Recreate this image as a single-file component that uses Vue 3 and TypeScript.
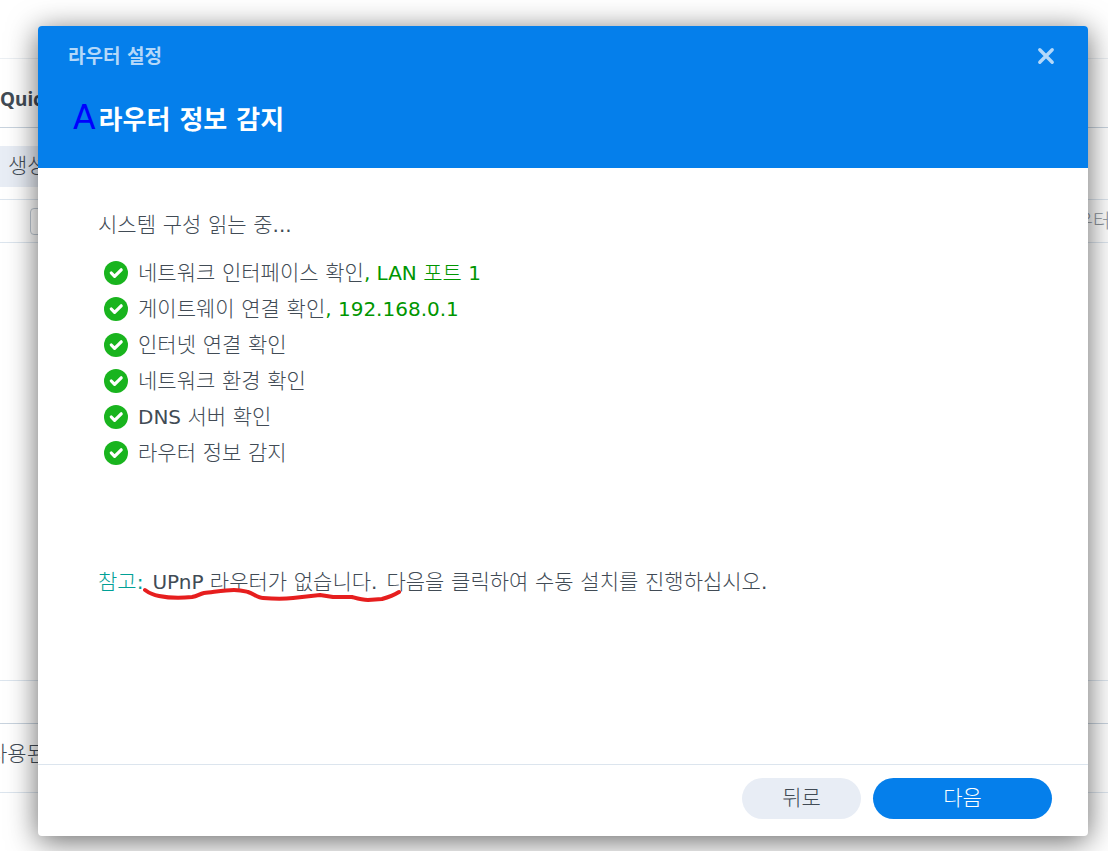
<script setup lang="ts">
interface Step {
  latin?: string
  label: string
  result?: { text: string; latin: boolean }[]
}

const steps: Step[] = [
  {
    label: '네트워크 인터페이스 확인',
    result: [
      { text: ', LAN ', latin: true },
      { text: '포트', latin: false },
      { text: ' 1', latin: true },
    ],
  },
  { label: '게이트웨이 연결 확인', result: [{ text: ', 192.168.0.1', latin: true }] },
  { label: '인터넷 연결 확인' },
  { label: '네트워크 환경 확인' },
  { latin: 'DNS ', label: '서버 확인' },
  { label: '라우터 정보 감지' },
]
</script>

<template>
  <div class="screen">
    <div class="backdrop" aria-hidden="true">
      <div class="bar"></div>
      <div class="tabs">QuickConnect</div>
      <div class="toolbar"><span class="create">생성</span></div>
      <div class="columns"><span class="box"></span><span class="column-name">라우터</span></div>
      <div class="rows"></div>
      <div class="paging"></div>
      <div class="status"><span>사용된</span></div>
    </div>

    <section class="dialog" role="dialog" aria-labelledby="dialog-title">
      <header class="head">
        <div class="title-row">
          <h1 id="dialog-title" class="title">라우터 설정</h1>
          <button class="close" type="button" aria-label="닫기">
            <svg viewBox="0 0 18 18" width="18" height="18">
              <path d="M2.8 2.8 15.2 15.2M15.2 2.8 2.8 15.2" />
            </svg>
          </button>
        </div>
        <div class="headline-row">
          <span class="mark">A</span>
          <h2 class="headline">라우터 정보 감지</h2>
        </div>
      </header>

      <main class="body">
        <p class="intro">시스템 구성 읽는 중<span class="latin">...</span></p>
        <ul class="steps">
          <li v-for="step in steps" :key="step.label" class="step">
            <svg class="tick" viewBox="0 0 24 24" width="24" height="24" aria-hidden="true">
              <circle cx="12" cy="12" r="12" />
              <path d="M7.3 12 10.6 15.4 17.2 8.8" />
            </svg>
            <span class="step-text"><span v-if="step.latin" class="latin">{{ step.latin }}</span>{{ step.label }}<span v-if="step.result" class="result"><span v-for="part in step.result" :key="part.text" :class="{ latin: part.latin }">{{ part.text }}</span></span></span>
          </li>
        </ul>
        <p class="note">
          <span class="note-label">참고<span class="latin">:</span></span>
          <span><span class="latin">UPnP </span>라우터가 없습니다<span class="latin">.</span></span>
          <span>다음을 클릭하여 수동 설치를 진행하십시오<span class="latin">.</span></span>
          <svg class="scribble" viewBox="0 0 262 18" width="262" height="18" aria-hidden="true">
            <path d="M4 5C8 8 12 10 18 11 28 13 42 13 51 12 57 11 58 9 63 8 73 7 84 5 93 5 100 5 103 6 107 7 113 9 117 13 122 13 135 14 143 14 152 13L179 10 192 12 211 12C218 14 221 15 227 15L241 14C248 12 253 10 258 7" />
          </svg>
        </p>
      </main>

      <footer class="foot">
        <button class="btn back" type="button">뒤로</button>
        <button class="btn next" type="button">다음</button>
      </footer>
    </section>
  </div>
</template>

<style>
body {
  margin: 0;
  background: #fff;
}
</style>

<style scoped>
.screen {
  position: relative;
  box-sizing: border-box;
  min-height: 100vh;
  padding: 26px 20px 15px 38px;
  display: flex;
  overflow: hidden;
  color: #414b55;
  font: 300 21px/36px "DejaVu Sans", "Noto Sans CJK KR", sans-serif;
}
.latin {
  font-size: 20px;
  font-weight: 400;
}
.backdrop {
  position: absolute;
  inset: 0;
  display: flex;
  flex-direction: column;
  white-space: nowrap;
}
.backdrop > div {
  box-sizing: border-box;
  border-bottom: 1px solid #dce5ee;
}
.backdrop .bar {
  height: 59px;
  border-color: #ebeff3;
}
.backdrop .tabs {
  height: 69px;
  padding-top: 22px;
  font: 700 19px/36px "Noto Sans", sans-serif;
  border-color: #c8d3de;
}
.toolbar {
  height: 72px;
  padding-top: 18px;
}
.create {
  display: block;
  width: 110px;
  padding-left: 8px;
  background: #e8edf5;
  line-height: 41px;
}
.columns {
  height: 43px;
  display: flex;
  align-items: center;
  justify-content: space-between;
  padding-left: 30px;
}
.box {
  box-sizing: border-box;
  width: 27px;
  height: 27px;
  border: 1px solid #c0cad4;
  border-radius: 4px;
}
.column-name {
  width: 50px;
  font-size: 19px;
  color: #8a929a;
}
.rows {
  flex: 1;
}
.paging {
  height: 43px;
}
.backdrop .paging {
  border-color: #c8d3de;
}
.status {
  height: 69px;
  margin-bottom: 58px;
  padding-top: 12px;
}
.status span {
  display: block;
  margin-left: -12px;
}
.dialog {
  position: relative;
  flex: 1;
  display: flex;
  flex-direction: column;
  border-radius: 4px;
  background: #fff;
  box-shadow: 0 5px 30px rgba(0, 0, 0, 0.6);
}
.head {
  box-sizing: border-box;
  height: 142px;
  padding: 12px 33px 0 30px;
  border-radius: 4px 4px 0 0;
  background: #057feb;
  color: #fff;
}
.title-row {
  display: flex;
  align-items: center;
  justify-content: space-between;
}
.title {
  margin: 0;
  font-size: 19px;
  font-weight: 700;
  line-height: 36px;
  color: #b4d8f9;
}
.close {
  display: flex;
  padding: 0;
  border: 0;
  background: none;
  cursor: pointer;
}
.close path {
  fill: none;
  stroke: #b4d8f9;
  stroke-width: 3.4;
  stroke-linecap: round;
}
.headline-row {
  display: flex;
  align-items: flex-start;
  gap: 3px;
  margin: 24px 0 0 5px;
}
.headline {
  margin: 0;
  font-size: 26px;
  font-weight: 700;
  line-height: 44px;
}
.mark {
  font-size: 33px;
  font-weight: 400;
  line-height: 40px;
  color: #00f;
}
.body {
  flex: 1;
  padding: 39px 60px 0;
}
.intro {
  margin: 0;
}
.steps {
  margin: 12px 0 0;
  padding: 0 0 0 6px;
  list-style: none;
}
.step {
  display: flex;
  align-items: center;
  gap: 10px;
  height: 36px;
}
.step-text {
  white-space: pre;
}
.tick circle {
  fill: #19b41e;
}
.tick path {
  fill: none;
  stroke: #fff;
  stroke-width: 3.2;
  stroke-linecap: round;
  stroke-linejoin: round;
}
.result {
  color: #009600;
}
.note {
  position: relative;
  display: flex;
  flex-wrap: wrap;
  column-gap: 9px;
  margin: 93px 0 0;
}
.note-label {
  color: #00a096;
}
.scribble {
  position: absolute;
  left: 43px;
  top: 21px;
  fill: none;
  stroke: #e61e1e;
  stroke-width: 4;
  stroke-linecap: round;
  stroke-linejoin: round;
}
.foot {
  display: flex;
  justify-content: flex-end;
  gap: 12px;
  padding: 13px 36px 17px;
  border-top: 1px solid #dce5ee;
}
.btn {
  height: 41px;
  padding: 0;
  border: 0;
  border-radius: 21px;
  font: inherit;
  line-height: 41px;
  cursor: pointer;
}
.back {
  width: 119px;
  background: #e8edf5;
  color: #414b55;
}
.next {
  width: 179px;
  background: #057feb;
  color: #fff;
}
</style>
